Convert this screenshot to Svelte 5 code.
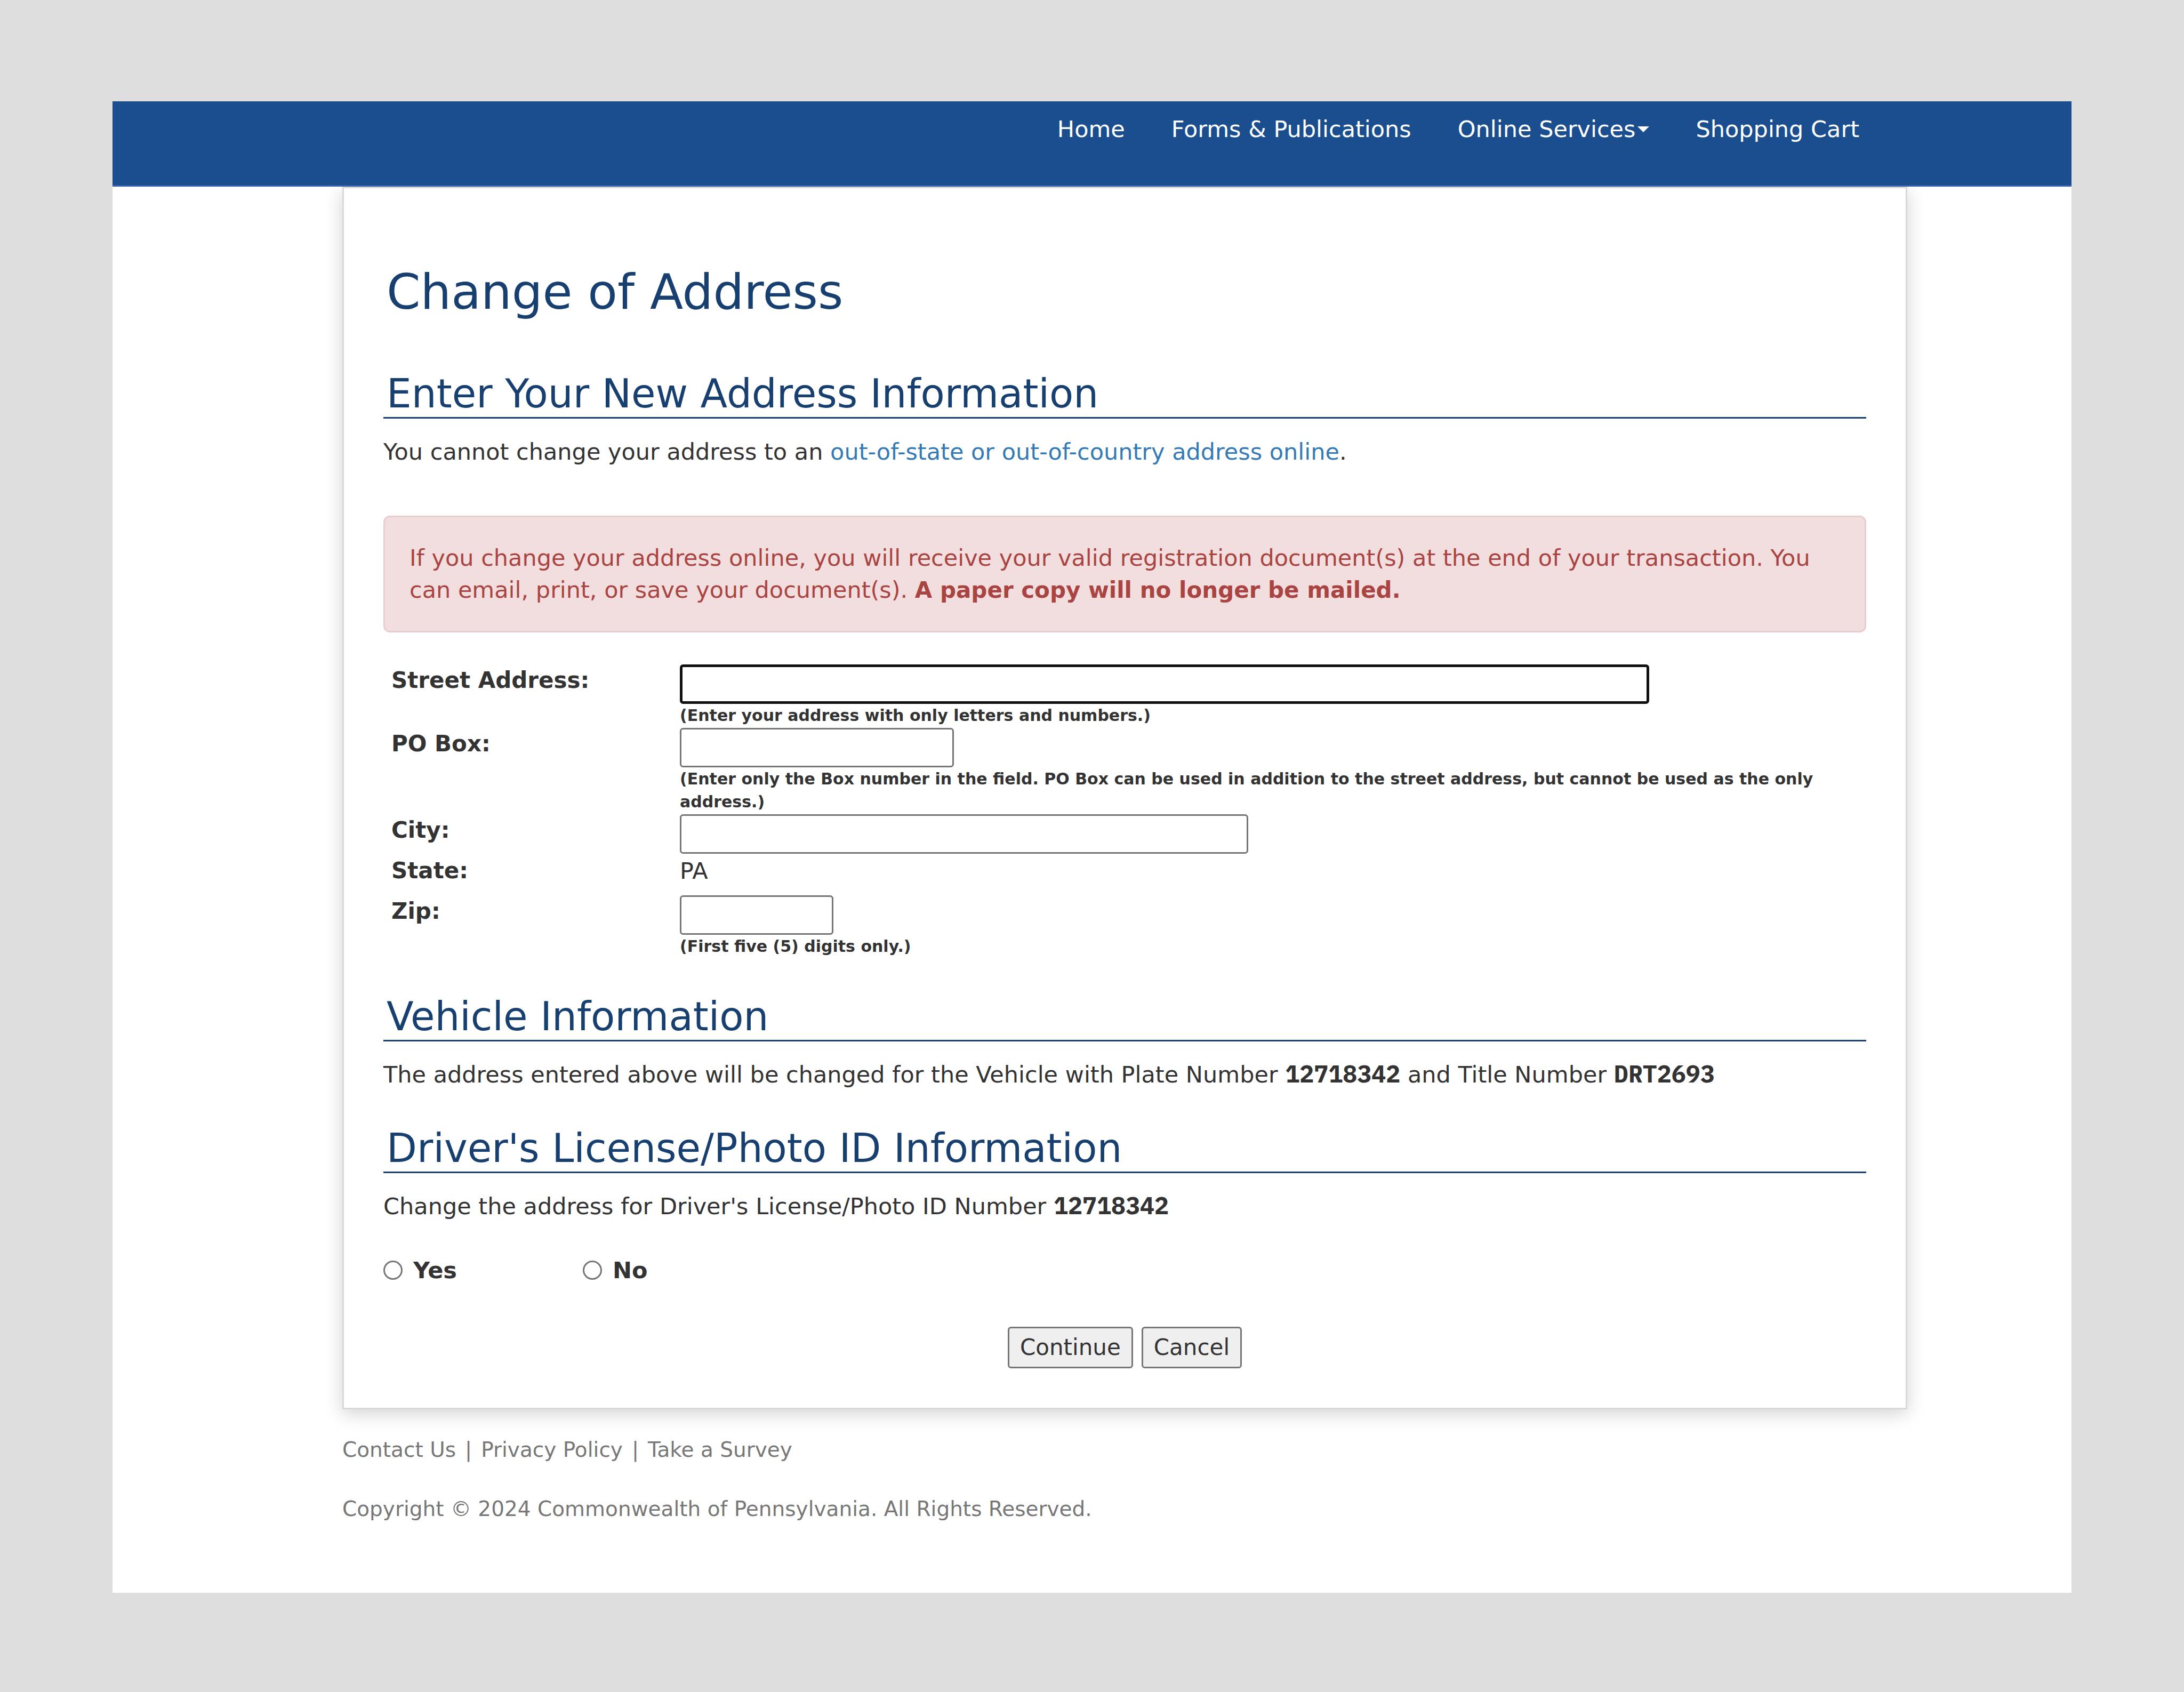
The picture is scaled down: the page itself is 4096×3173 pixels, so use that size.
<script lang="ts">
  const nav = ['Home', 'Forms & Publications', 'Online Services', 'Shopping Cart'];
  const footer = ['Contact Us', 'Privacy Policy', 'Take a Survey'];
  const plate = '12718342';
  const title = 'DRT2693';
  const license = '12718342';
  let answer = $state('');
</script>

<div class="page">
  <header class="topbar">
    <nav>
      {#each nav as item}
        <a href="#top">{item}{#if item === 'Online Services'}<span class="caret"></span>{/if}</a>
      {/each}
    </nav>
  </header>

  <main class="card">
    <h1>Change of Address</h1>

    <h2>Enter Your New Address Information</h2>
    <p>You cannot change your address to an <a href="#online">out-of-state or out-of-country address online</a>.</p>

    <div class="alert" role="alert">
      If you change your address online, you will receive your valid registration document(s) at the end of your
      transaction. You can email, print, or save your document(s). <strong>A paper copy will no longer be mailed.</strong>
    </div>

    <div class="fields">
      <label for="street">Street Address:</label>
      <div class="field">
        <input id="street" class="street" type="text" />
        <small>(Enter your address with only letters and numbers.)</small>
      </div>
      <label for="pobox">PO Box:</label>
      <div class="field">
        <input id="pobox" class="pobox" type="text" />
        <small>(Enter only the Box number in the field. PO Box can be used in addition to the street address, but cannot be used as the only address.)</small>
      </div>
      <label for="city">City:</label>
      <div class="field">
        <input id="city" class="city" type="text" />
      </div>
      <span class="name">State:</span>
      <div class="field state">PA</div>
      <label for="zip">Zip:</label>
      <div class="field">
        <input id="zip" class="zip" type="text" />
        <small>(First five (5) digits only.)</small>
      </div>
    </div>

    <h2>Vehicle Information</h2>
    <p>The address entered above will be changed for the Vehicle with Plate Number <b class="code">{plate}</b> and Title Number <b class="code">{title}</b></p>

    <h2>Driver's License/Photo ID Information</h2>
    <p>Change the address for Driver's License/Photo ID Number <b class="code">{license}</b></p>

    <div class="choices">
      <label><input type="radio" name="license" value="yes" bind:group={answer} />Yes</label>
      <label><input type="radio" name="license" value="no" bind:group={answer} />No</label>
    </div>

    <div class="actions">
      <button type="button">Continue</button>
      <button type="button">Cancel</button>
    </div>
  </main>

  <footer>
    <p>{#each footer as item, i}{#if i}<span class="sep">|</span>{/if}<a href="#footer">{item}</a>{/each}</p>
    <p>Copyright © 2024 Commonwealth of Pennsylvania. All Rights Reserved.</p>
  </footer>
</div>

<style>
  :global(body) {
    background: #dedede;
  }
  .page,
  .page * {
    box-sizing: border-box;
  }
  .page {
    margin: 190px 211px;
    padding-bottom: 76px;
    background: #fff;
    color: #333;
    font: 43px/60px Verdana, 'DejaVu Sans', sans-serif;
  }
  .topbar {
    height: 160px;
    padding: 22px 398px 0 0;
    background: #1a4e8f;
    border-bottom: 3px solid #3464a6;
  }
  nav {
    display: flex;
    justify-content: flex-end;
    gap: 87px;
  }
  nav a {
    display: flex;
    align-items: center;
    gap: 4px;
    color: #fff;
    text-decoration: none;
  }
  .caret {
    border: 11px solid transparent;
    border-top-color: #fff;
    border-bottom: 0;
  }
  .card {
    margin: 0 308px 0 431px;
    padding: 129px 74px 74px;
    border: 3px solid #d9d9d9;
    box-shadow: 0 8px 32px rgba(0, 0, 0, 0.18);
    clip-path: inset(0 -80px -80px);
  }
  h1,
  h2 {
    margin: 0;
    color: #173f6f;
    font-weight: 400;
  }
  h1 {
    padding-left: 6px;
    margin-bottom: 80px;
    font-size: 91px;
    line-height: 132px;
  }
  h2 {
    margin-top: 64px;
    padding-left: 6px;
    border-bottom: 3px solid #173f6f;
    font-size: 74px;
    line-height: 88px;
  }
  p {
    margin: 32px 0 0;
  }
  p a {
    color: #337ab7;
    text-decoration: none;
  }
  .alert {
    margin-top: 90px;
    padding: 46px;
    border: 3px solid #ebccd1;
    border-radius: 12px;
    background: #f2dede;
    color: #a94442;
  }
  strong {
    font-size: 42px;
  }
  .fields {
    display: grid;
    grid-template-columns: 541px 1fr;
    margin-top: 60px;
    padding-left: 15px;
  }
  .fields label,
  .name {
    font-size: 42px;
    font-weight: 700;
  }
  .field {
    display: flex;
    flex-direction: column;
    align-items: flex-start;
    padding-bottom: 2px;
  }
  .state {
    height: 76px;
  }
  .field input {
    height: 74px;
    border: 3px solid #767676;
    border-radius: 6px;
    background: #fff;
    font: inherit;
  }
  .field .street {
    width: 1818px;
    border: 5px solid #101010;
    outline: 0;
  }
  .field .pobox {
    width: 514px;
  }
  .field .city {
    width: 1066px;
  }
  .field .zip {
    width: 288px;
  }
  small {
    font-size: 30px;
    font-weight: 700;
    line-height: 43px;
  }
  .code {
    font-family: 'IBM Plex Mono', 'Liberation Mono', monospace;
    font-size: 45px;
    line-height: 1;
  }
  .choices {
    display: flex;
    gap: 236px;
    margin-top: 60px;
    font-weight: 700;
  }
  .choices label {
    display: flex;
    align-items: center;
    gap: 20px;
  }
  .choices input {
    appearance: none;
    width: 36px;
    height: 36px;
    margin: 0;
    border: 3px solid #767676;
    border-radius: 50%;
  }
  .actions {
    display: flex;
    justify-content: center;
    gap: 16px;
    margin-top: 76px;
  }
  button {
    height: 78px;
    padding: 0 20px;
    border: 3px solid #767676;
    border-radius: 6px;
    background: #efefef;
    color: #333;
    font: inherit;
    font-size: 42px;
  }
  footer {
    padding: 16px 431px 0;
    color: #777;
    font-size: 39px;
  }
  footer p {
    margin: 30px 0 51px;
  }
  footer a {
    color: inherit;
  }
  .sep {
    margin: 0 17px;
  }
</style>
